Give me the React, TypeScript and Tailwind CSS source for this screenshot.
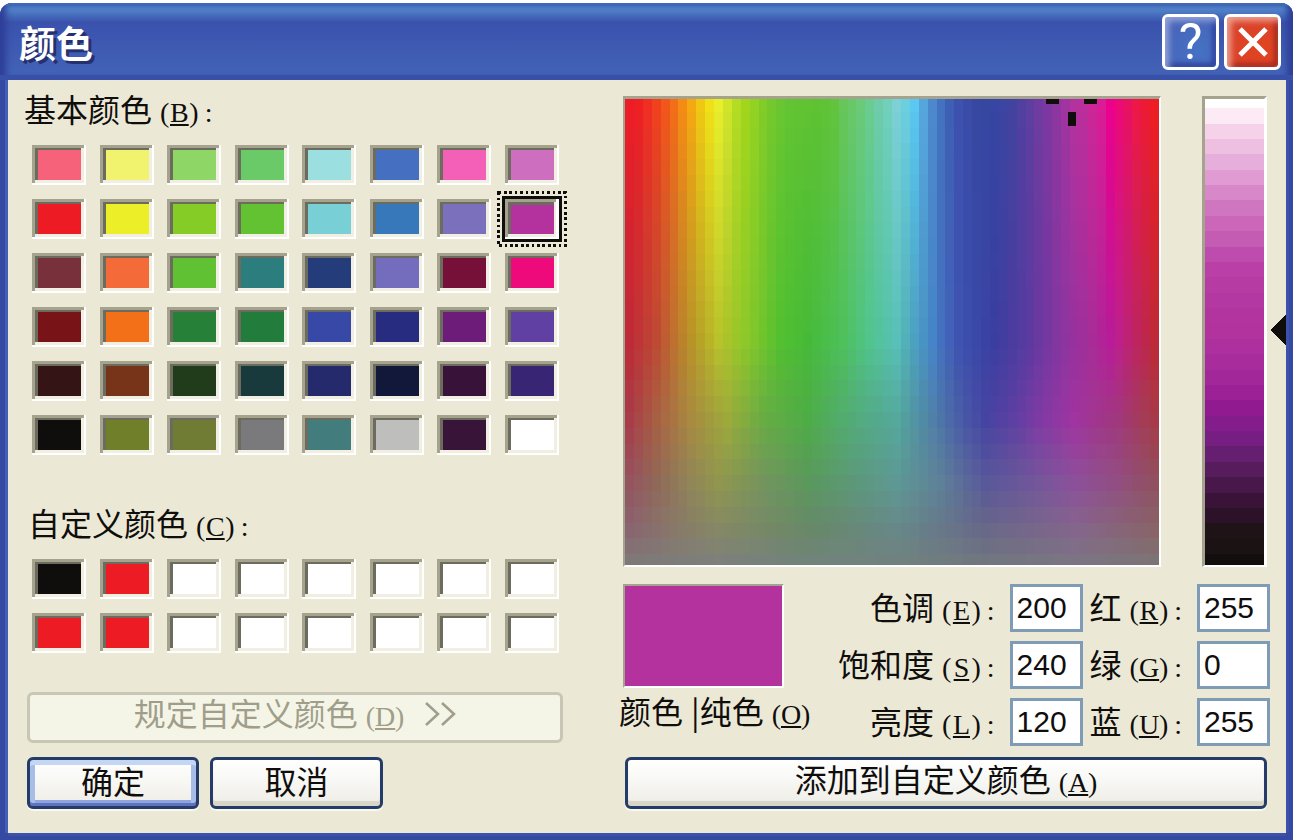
import { useState } from 'react';
import clsx from 'clsx';

const BASIC = [
  '#f5627a', '#f1f36e', '#8ed666', '#6aca68', '#9cdfe0', '#456fc0', '#f45fb8', '#ce6ebe',
  '#ed1c24', '#ecee28', '#86cc26', '#62c232', '#78d0d6', '#3678ba', '#7a70bc', '#b4329e',
  '#78303a', '#f46a38', '#60c232', '#2c7e7e', '#243c7a', '#746cbc', '#761038', '#ee0a7a',
  '#781418', '#f47018', '#268038', '#227c3c', '#3848a6', '#282c80', '#6e1c7a', '#6040a2',
  '#341414', '#783418', '#203c1a', '#183a3c', '#242a6c', '#12183a', '#381238', '#382674',
  '#100e0d', '#70802a', '#707c34', '#7a7a7c', '#427c7c', '#bebebc', '#381438', '#ffffff',
];

const CUSTOM = [
  '#100e0d', '#ed1c24', '#ffffff', '#ffffff', '#ffffff', '#ffffff', '#ffffff', '#ffffff',
  '#ed1c24', '#ed1c24', '#ffffff', '#ffffff', '#ffffff', '#ffffff', '#ffffff', '#ffffff',
];

const LUMINANCE = [
  '#ffffff', '#fceaf5', '#f6d2ea', '#efbfe2', '#e6aeda', '#e09cd2', '#d888c8', '#d076c0',
  '#cc66b8', '#c45cb4', '#be4cae', '#ba40a8', '#b63ca4', '#b438a2', '#b2349f', '#b2329e',
  '#ae309e', '#a82c9c', '#a2289a', '#9c2096', '#921a90', '#841c8c', '#761e82', '#661e70',
  '#561c5c', '#48184a', '#3a1438', '#2c1228', '#1e1418', '#1a1213', '#110e0d',
];

// Colours along the hue axis at a few saturation rows, "column:hex"
const COLS = 60;
const ROWS = 30;
const LEVELS = [
  {
    row: 0,
    stops:
      '0:ee1c26 1:ee2024 2:f02f22 3:f0401e 4:f2561a 5:f26e18 6:f48c14 7:f4a812 8:f0c814 9:f0e018 10:e8ee2a 11:d0e42a 12:b4dc22 13:a2d61c 14:92d222 15:82cc28 16:74c82c 17:6ac630 18:62c432 21:5ec232 23:62c43c 24:66c65a 25:68c868 26:6aca78 27:6acc90 28:6eccaa 29:70d0bc 30:7cd0d6 31:6ccfe0 32:5ac8f0 33:56a6de 34:4c88cc 35:4272c0 36:3e60b4 37:3c52ae 38:3a4ca8 39:3648a2 41:3646a2 43:42439f 44:5040a0 45:5e3ea0 46:6e3ca0 47:7c38a0 48:8e36a0 49:a034a0 50:b4329e 51:bc2e9c 52:cc2698 53:da1c96 54:ec008c 55:ec0a78 56:ea1062 57:ed1848 58:ed1a34 59:ee1c24',
  },
  {
    row: 15,
    stops:
      '0:be2a38 3:be4a34 5:be7030 7:b89428 10:b8c22a 13:8cc82a 17:52c030 20:46ba38 24:4ec05c 27:50c48c 30:58c0b8 31:52b0b8 32:4ca0c0 34:4684c8 35:4470c0 37:3e54b0 39:3a48a8 41:3a3ea0 45:5c3aa0 49:8e34a0 52:a82c98 54:b81c98 55:bc208a 57:be2460 59:be2a38',
  },
  {
    row: 20,
    stops:
      '0:a83c48 3:a86044 7:a88a40 11:9caa3c 15:68ac44 20:4eac46 24:52ac70 30:54a89c 34:5080a8 38:4854a6 40:4644a2 43:5c40a2 46:7e3aa4 50:a034a0 55:a0387c 58:a43c54 59:a63a48',
  },
  {
    row: 24,
    stops:
      '0:945460 3:906858 7:908658 10:90964e 15:74945e 20:5a985c 25:5c9878 30:5e9894 35:5e8098 40:58589a 46:74569a 50:8c509a 55:924e80 59:905060',
  },
  { row: 27, stops: '0:886570 5:88786a 10:858866 20:688868 30:678888 40:686888 50:84668c 59:886468' },
  { row: 29, stops: '0:7e7878 10:7e807a 20:70847a 30:70827f 40:70767f 50:7c7484 59:7c7474' },
];

type Rgb = number[];

const parse = (hex: string): Rgb => [0, 2, 4].map(i => parseInt(hex.slice(i, i + 2), 16));
const mix = (a: Rgb, b: Rgb, t: number): Rgb => a.map((v, i) => v + (b[i] - v) * t);

const TABLE = LEVELS.map(level => {
  const stops = level.stops.split(' ').map(s => {
    const [col, hex] = s.split(':');
    return { col: Number(col), rgb: parse(hex) };
  });
  const colors = Array.from({ length: COLS }, (_, c) => {
    const i = Math.max(1, stops.findIndex(s => s.col >= c));
    const a = stops[i - 1];
    const b = stops[i];
    return mix(a.rgb, b.rgb, (c - a.col) / (b.col - a.col));
  });
  return { row: level.row, colors };
});

function cellColor(col: number, row: number) {
  const i = Math.max(1, TABLE.findIndex(l => l.row >= row));
  const a = TABLE[i - 1];
  const b = TABLE[i];
  const rgb = mix(a.colors[col], b.colors[col], (row - a.row) / (b.row - a.row));
  return `rgb(${rgb.map(Math.round).join(',')})`;
}

function Spectrum() {
  return (
    <svg
      role="img"
      aria-label="色调和饱和度"
      viewBox="0 0 534 466"
      preserveAspectRatio="none"
      shapeRendering="crispEdges"
      className="block h-[466px] w-full"
    >
      {Array.from({ length: COLS * ROWS }, (_, i) => {
        const col = i % COLS;
        const row = Math.floor(i / COLS);
        return (
          <rect
            key={i}
            x={col * 8.9}
            y={row === 0 ? 0 : row * 15.8 - 3}
            width={9.5}
            height={16.5}
            fill={cellColor(col, row)}
          />
        );
      })}
      {/* Crosshair, clipped by the top edge */}
      <path d="M421 0h13v5h-13zM459 0h13v5h-13zM443 13h8v14h-8z" fill="#100e0d" />
    </svg>
  );
}

function AccessKey({ letter, colon = false }: { letter: string; colon?: boolean }) {
  return (
    <span className="ml-2 inline-flex items-baseline font-['Liberation_Serif',serif] text-[28px]">
      (<span className="w-5 text-center underline decoration-2 underline-offset-2">{letter}</span>)
      {colon && <span className="ml-1.5">:</span>}
    </span>
  );
}

function Swatch({ color, selected, onSelect }: { color: string; selected: boolean; onSelect: () => void }) {
  return (
    <button
      type="button"
      aria-label={color}
      aria-pressed={selected}
      onClick={onSelect}
      style={{ backgroundColor: color }}
      className={clsx(
        'relative h-10 w-[54px] outline-none',
        selected
          ? 'shadow-[inset_-3px_-2px_#fff,inset_3px_3px_#a5a28e,inset_-5px_-5px_#f1efe2,inset_6px_6px_#6b6b5e,0_0_0_3px_#100e0d]'
          : 'shadow-[inset_-2px_-2px_#fff,inset_3px_3px_#a5a28e,inset_-5px_-5px_#f1efe2,inset_6px_5px_#6b6b5e]',
      )}
    >
      {selected && (
        <svg viewBox="0 0 70 56" className="absolute -inset-2 h-14 w-[70px]" shapeRendering="crispEdges">
          <rect x="1.5" y="1.5" width="67" height="53" fill="none" stroke="#100e0d" strokeWidth="3" strokeDasharray="2.7 2.7" />
        </svg>
      )}
    </button>
  );
}

function SwatchGrid({ colors, selected, onSelect }: { colors: string[]; selected: number; onSelect: (i: number) => void }) {
  return (
    <div className="mt-[17px] ml-2 grid w-[527px] grid-cols-[repeat(8,54px)] justify-between gap-y-[14px]">
      {colors.map((color, i) => (
        <Swatch key={i} color={color} selected={i === selected} onSelect={() => onSelect(i)} />
      ))}
    </div>
  );
}

function Field({ id, label, letter, value }: { id: string; label: string; letter: string; value: string }) {
  return (
    <div className="flex h-12 items-center justify-end">
      <label htmlFor={id} className="flex h-9 items-baseline whitespace-nowrap leading-8">
        {label}
        <AccessKey letter={letter} colon />
      </label>
      <input
        id={id}
        defaultValue={value}
        className="ml-[15px] h-12 w-[73px] border-[3px] border-[#7f9bb5] bg-white pl-1 font-['Liberation_Sans',sans-serif] text-[30px] outline-none"
      />
    </div>
  );
}

const button =
  'h-[52px] rounded-md border-[3px] border-[#243c68] bg-linear-to-b from-white via-[#f6f6f3] to-[#eeede6] shadow-[inset_0_-5px_1px_#d9d5c8,0_2px_#f8f7f0] leading-8 pb-1.5';

export default function App() {
  const [basic, setBasic] = useState(15);
  const [custom, setCustom] = useState(-1);

  return (
    <div className="min-h-screen bg-white pt-[3px] font-['Noto_Sans_CJK_SC',sans-serif] text-[32px] text-[#100e0d]">
      <div className="flex min-h-[calc(100vh-3px)] flex-col overflow-hidden rounded-t-xl bg-[#3649a2]">
        <header className="flex h-[77px] items-center justify-between bg-linear-to-b from-[#5284ca] from-8% via-[#3a52ac] via-25% to-[#4262b6] to-90% pr-3 pl-[19px] shadow-[inset_0_3px_#3f68b8,inset_0_-5px_#3850a8,inset_6px_0_6px_#2e3f98,inset_-6px_0_6px_#2e3f98]">
          <h1 className="text-[37px] leading-10 font-bold text-white [text-shadow:3px_3px_#25306e]">颜色</h1>
          <div className="flex gap-[5px]">
            <button
              type="button"
              aria-label="帮助"
              className="flex h-14 w-[57px] items-center justify-center rounded-md border-[3px] border-white bg-radial-[at_65%_70%] from-[#4472c4] to-[#4a60b4] font-[Roboto,sans-serif] text-[50px] leading-none text-white shadow-[inset_4px_4px_6px_#92a2dc,inset_-4px_-4px_4px_#2e46a2]"
            >
              ?
            </button>
            <button
              type="button"
              aria-label="关闭"
              className="flex h-14 w-[57px] items-center justify-center rounded-md border-[3px] border-white bg-radial-[at_70%_65%] from-[#e04420] to-[#d8402e] shadow-[inset_4px_4px_6px_#eda090,inset_-4px_-4px_4px_#a82c20]"
            >
              <svg viewBox="0 0 30 30" className="h-[30px] w-[30px]" fill="none" stroke="white" strokeWidth="5">
                <path d="M2 2l26 26M28 2L2 28" />
              </svg>
            </button>
          </div>
        </header>

        <main className="mr-[7px] mb-[7px] ml-2 flex flex-1 bg-[#ebe9d6] pb-6 shadow-[-3px_0_#3f60b6,0_3px_#3a52ac,3px_0_#3a52ac]">
          <section className="w-[615px] shrink-0 pt-3 pl-4">
            <h2 className="flex h-9 items-baseline leading-8">
              基本颜色
              <AccessKey letter="B" colon />
            </h2>
            <SwatchGrid colors={BASIC} selected={basic} onSelect={setBasic} />

            <h2 className="mt-[51px] ml-1 flex h-9 items-baseline leading-8">
              自定义颜色
              <AccessKey letter="C" colon />
            </h2>
            <SwatchGrid colors={CUSTOM} selected={custom} onSelect={setCustom} />

            <div className="ml-[3px] w-[536px]">
              <button
                type="button"
                disabled
                className="mt-[39px] flex h-[51px] w-full items-center justify-center rounded-md border-[3px] border-[#c8c6b4] bg-[#f5f5e7] pb-1.5 leading-8 text-[#a09e8a]"
              >
                <span className="flex items-baseline">
                  规定自定义颜色
                  <AccessKey letter="D" />
                  <svg viewBox="0 0 32 24" className="ml-5 h-6 w-8" fill="none" stroke="currentColor" strokeWidth="2.5">
                    <path d="M2 1l12 11L2 23M18 1l12 11L18 23" />
                  </svg>
                </span>
              </button>
              <div className="mt-[14px] flex gap-[11px]">
                <button
                  type="button"
                  className="h-[52px] w-[172px] rounded-md border-[3px] border-[#243c68] bg-linear-to-b from-white to-[#eeede6] pb-1.5 leading-8 shadow-[inset_0_5px_#c4d6f2,inset_0_-3px_#6272c0,inset_5px_0_#a8bce8,inset_-5px_0_#a8bce8,inset_0_-6px_#8ea6de,0_2px_#f8f7f0]"
                >
                  确定
                </button>
                <button type="button" className={clsx(button, 'w-[173px]')}>
                  取消
                </button>
              </div>
            </div>
          </section>

          <section className="flex min-w-0 flex-1 flex-col pt-4">
            <div className="flex">
              <div className="min-w-0 flex-1 border-t-[3px] border-r-2 border-b-2 border-l-2 border-t-[#a5a28e] border-r-white border-b-white border-l-[#a5a28e]">
                <Spectrum />
              </div>
              <div className="ml-[41px] flex h-[471px] w-[65px] flex-col border-t-[3px] border-r-[3px] border-b-2 border-l-[3px] border-t-[#a5a28e] border-r-white border-b-white border-l-[#a5a28e]">
                {LUMINANCE.map((color, i) => (
                  <div key={i} className="flex-1 first:grow-[0.6] last:grow-[0.7]" style={{ backgroundColor: color }} />
                ))}
              </div>
              <svg viewBox="0 0 16 30" className="mt-[219px] ml-[3px] h-[30px] w-4" shapeRendering="crispEdges">
                <path d="M16 0L0 15L16 30z" fill="#100e0d" />
              </svg>
            </div>

            <div className="mt-[17px] flex justify-between pr-4">
              <div>
                <div className="h-[104px] w-[161px] border-2 border-t-[#a5a28e] border-r-white border-b-white border-l-[#a5a28e] bg-[#b4329e]" />
                <div className="-ml-1 mt-1.5 flex items-baseline leading-8 whitespace-nowrap">
                  颜色
                  <span className="ml-2">|纯色</span>
                  <AccessKey letter="O" />
                </div>
              </div>
              <div className="flex gap-[7px]">
                <div className="flex flex-col gap-[9px]">
                  <Field id="hue" label="色调" letter="E" value="200" />
                  <Field id="sat" label="饱和度" letter="S" value="240" />
                  <Field id="lum" label="亮度" letter="L" value="120" />
                </div>
                <div className="flex flex-col gap-[9px]">
                  <Field id="red" label="红" letter="R" value="255" />
                  <Field id="green" label="绿" letter="G" value="0" />
                  <Field id="blue" label="蓝" letter="U" value="255" />
                </div>
              </div>
            </div>

            <button type="button" className={clsx(button, 'mt-[11px] mr-[19px] ml-0.5 flex items-center justify-center')}>
              <span className="flex items-baseline">
                添加到自定义颜色
                <AccessKey letter="A" />
              </span>
            </button>
          </section>
        </main>
      </div>
    </div>
  );
}
